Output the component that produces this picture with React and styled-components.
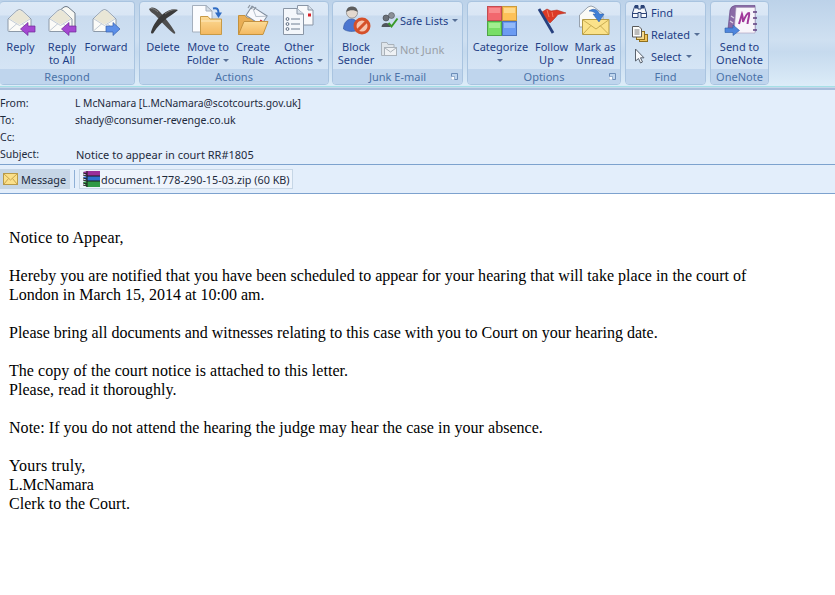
import React from "react";
import styled, { createGlobalStyle } from "styled-components";

const Global = createGlobalStyle`
html, body { margin: 0; padding: 0; background: #fff; }
body { font-family: "Noto Sans", "Liberation Sans", sans-serif; overflow: hidden; }
`;

const Page = styled.div`
  width: 835px;
  height: 595px;
  overflow: hidden;
  background: #fff;
`;

const Ribbon = styled.div`
  height: 86px;
  display: flex;
  align-items: flex-start;
  padding-top: 1px;
  box-sizing: border-box;
  background: linear-gradient(180deg, #bcd2e9 0, #cfe0f1 40px, #c6daee 52px, #dcecf8 86px);
`;

const Group = styled.div`
  width: ${(p) => p.$w}px;
  margin-right: ${(p) => p.$gap ?? 4}px;
  height: 84px;
  flex: none;
  box-sizing: border-box;
  display: flex;
  flex-direction: column;
  border: 1px solid #a9c4e0;
  border-left-width: ${(p) => (p.$first ? 0 : 1)}px;
  border-radius: 4px;
  overflow: hidden;
  background: linear-gradient(180deg, #dde9f6 0, #d9e6f5 13px, #c9dbef 14px, #d5e5f5 68px);
`;

const GroupBody = styled.div`
  flex: 1;
  display: flex;
  padding-left: ${(p) => p.$pad ?? 0}px;
`;

const GroupLabel = styled.div`
  position: relative;
  height: 15px;
  line-height: 15px;
  text-align: center;
  font-size: 11px;
  color: #4a72a8;
  background: #bfd5ed;
`;

const Launcher = styled.svg`
  position: absolute;
  right: 4px;
  top: 4px;
`;

const BigButton = styled.div`
  width: ${(p) => p.$w}px;
  flex: none;
  display: flex;
  flex-direction: column;
  align-items: center;
  padding-top: 3px;
`;

const BigIcon = styled.svg`
  width: 32px;
  height: 32px;
  overflow: visible;
  flex: none;
`;

const BigText = styled.div`
  margin-top: 3px;
  font-size: 11px;
  line-height: 13px;
  color: #1f3f86;
  text-align: center;
  white-space: nowrap;
`;

const Caret = styled.span`
  display: inline-block;
  width: 0;
  height: 0;
  margin-left: ${(p) => p.$ml ?? 4}px;
  vertical-align: 2px;
  border-left: 3px solid transparent;
  border-right: 3px solid transparent;
  border-top: 3px solid #566f96;
`;

const SmallColumn = styled.div`
  display: flex;
  flex-direction: column;
  padding-top: ${(p) => p.$top ?? 0}px;
  padding-left: ${(p) => p.$left ?? 0}px;
  row-gap: ${(p) => p.$gap ?? 0}px;
`;

const SmallButton = styled.div`
  display: flex;
  align-items: center;
  height: 22px;
  box-sizing: border-box;
  padding-bottom: 2px;
  font-size: 11px;
  white-space: nowrap;
  color: ${(p) => (p.$off ? "#9a9fa6" : "#1f3f86")};
`;

const SmallIcon = styled.svg`
  width: 16px;
  height: 16px;
  flex: none;
  margin-right: 3px;
  overflow: visible;
`;

const Seam = styled.div`
  height: 4px;
  background: linear-gradient(180deg, #a4e0e6 0, #a4e0e6 1px, #c6d8ea 1px, #c6d8ea 2px, #a8bedc 2px, #a8bedc 4px);
`;

const Header = styled.div`
  height: 75px;
  box-sizing: border-box;
  padding-top: 5px;
  background: #e3eefb;
  border-bottom: 1px solid #7da2ce;
`;

const HeaderRow = styled.div`
  display: flex;
  height: ${(p) => p.$h ?? 17}px;
  line-height: 17px;
  font-size: ${(p) => p.$fs ?? 10.5}px;
  color: #1d2a3c;
  white-space: nowrap;
`;

const HeaderKey = styled.div`
  width: ${(p) => p.$w ?? 75}px;
  flex: none;
  font-size: 10.5px;
`;

const Tabs = styled.div`
  height: 29px;
  box-sizing: border-box;
  display: flex;
  align-items: center;
  background: #e3eefb;
  border-bottom: 1px solid #7da2ce;
`;

const MessageTab = styled.div`
  width: 70px;
  height: 20px;
  box-sizing: border-box;
  display: flex;
  align-items: center;
  padding-left: 3px;
  font-size: 10.8px;
  color: #1d2a3c;
  background: #c6d6e6;
`;

const TabDivider = styled.div`
  width: 1px;
  height: 18px;
  margin: 0 4px;
  background: #8fb0d6;
`;

const AttachTab = styled.div`
  height: 20px;
  width: 214px;
  box-sizing: border-box;
  display: flex;
  align-items: center;
  padding-left: 3px;
  font-size: 10.8px;
  color: #1d2a3c;
  background: #eef4fc;
  border: 1px solid #c6d6e6;
`;

const Body = styled.div`
  padding: 34px 0 0 9px;
  font-family: "Liberation Serif", "Times New Roman", serif;
  font-size: 16px;
  line-height: 19px;
  color: #000;
`;

const Para = styled.div`
  margin-bottom: 19px;
`;

const Line = styled.div`
  letter-spacing: ${(p) => p.$ls ?? 0}px;
  white-space: nowrap;
`;

const MiniEnvelope = styled.svg`
  width: 15px;
  height: 12px;
  flex: none;
  margin-right: 3px;
`;

const ZipIcon = styled.svg`
  width: 18px;
  height: 17px;
  flex: none;
`;

const Env = () => (
  <g>
    <path d="M3 14 L12 5.5 Q14.5 3.5 17 5.5 L26 14 V25.5 Q26 26.5 25 26.5 H4 Q3 26.5 3 25.5 Z" fill="#fbfbf8" stroke="#8c99a8" />
    <path d="M4 13.5 L12.5 6 Q14.5 4.5 16.5 6 L25 13.5 L14.5 19.5 Z" fill="#e9e6d6" />
    <path d="M4 14 L14.5 20.5 L25 14 M4 25.5 L12 18.5 M25 25.5 L17 18.5" fill="none" stroke="#c3ccd6" />
  </g>
);

const ArrowLeft = () => (
  <path d="M15.5 24 L23 17.5 V21 H30 V27 H23 V30.5 Z" fill="#a548d2" stroke="#6f2b96" strokeWidth="0.7" />
);

const ArrowRight = () => (
  <path d="M30 24 L23 17.5 V21 H16 V27 H23 V30.5 Z" fill="#5c8fe8" stroke="#3560ad" strokeWidth="0.7" />
);

const ReplyIcon = () => (
  <BigIcon viewBox="0 0 32 32"><Env /><ArrowLeft /></BigIcon>
);

const ReplyAllIcon = () => (
  <BigIcon viewBox="0 0 32 32">
    <path d="M13 6 L18 2 Q20 1 22 2 L29 8 V25 H13 Z" fill="#f8f8f3" stroke="#6c7886" />
    <Env /><ArrowLeft />
  </BigIcon>
);

const ForwardIcon = () => (
  <BigIcon viewBox="0 0 32 32"><Env /><ArrowRight /></BigIcon>
);

const DeleteIcon = () => (
  <BigIcon viewBox="0 0 32 32">
    <path d="M2 4 C4 1.5 8 2 11 5 C16 10 24 20 28 27 C29 29 27 29 26 28 C20 23 12 14 8 10 C6 8 3 7 2 4 Z" fill="#4f4f4f" />
    <path d="M31 5 C27 3 21 5 16 9 C11 13 6 20 4 27 C4 29 6 29 7 27 C10 22 15 17 20 13 C24 10 28 8 31 5 Z" fill="#3a3a3a" />
    <path d="M3.5 3.5 C6 3 9 5 11 7 M29 4.5 C25 4.5 21 6.5 18 9" fill="none" stroke="#8c8c8c" strokeWidth="0.8" />
  </BigIcon>
);

const MoveIcon = () => (
  <BigIcon viewBox="0 0 32 32">
    <defs>
      <linearGradient id="folderFill" x1="0" y1="0" x2="0" y2="1">
        <stop offset="0" stopColor="#fcdb96" />
        <stop offset="1" stopColor="#f3b860" />
      </linearGradient>
    </defs>
    <path d="M0.5 0.5 H14 L20 6 V27 H0.5 Z" fill="#fbfcfe" stroke="#a4afbd" />
    <path d="M14 0.5 V6 H20 Z" fill="#d6dfe9" stroke="#a4afbd" />
    <path d="M8.5 11.5 H16 L18 14 H29.5 V29.5 H8.5 Z" fill="url(#folderFill)" stroke="#c79a47" />
    <path d="M9 16 H29" stroke="#fdeabf" />
    <path d="M21 3.5 C25 2.5 26.5 4 26.5 8" fill="none" stroke="#2f6cc4" strokeWidth="2" />
    <path d="M23 7.5 H30 L26.5 13 Z" fill="#2f6cc4" />
  </BigIcon>
);

const RuleIcon = () => (
  <BigIcon viewBox="0 0 32 32">
    <path d="M1.5 10.5 H8 L10 13 H21 V29.5 H1.5 Z" fill="#e9ae55" stroke="#c4923f" />
    <g transform="rotate(33 20 11)">
      <rect x="10.5" y="5.5" width="18" height="11" fill="#f7f9fd" stroke="#7f8c9c" />
      <path d="M11 6 L19.5 12 L28 6" fill="none" stroke="#b6c0cc" />
      <rect x="25" y="12" width="2.5" height="2.5" fill="#d8232a" />
    </g>
    <path d="M7 16.5 H31 L26 29.5 H1.5 Z" fill="url(#folderFill)" stroke="#c4923f" />
    <path d="M11 3 L13 0 M14 4 L16 1 M17 5 L19 2" stroke="#8a94a0" strokeWidth="1.2" />
  </BigIcon>
);

const OtherIcon = () => (
  <BigIcon viewBox="0 0 32 32">
    <path d="M14.5 0.5 H25 L30 5 V20 H14.5 Z" fill="#f9fafc" stroke="#8a96a6" />
    <path d="M25 0.5 V5 H30" fill="#d6dfe9" stroke="#8a96a6" />
    <rect x="25" y="8.5" width="3" height="3" fill="#d8232a" />
    <path d="M0.5 3.5 H14 L20.5 9 V29.5 H0.5 Z" fill="#f4f7fb" stroke="#8a96a6" />
    <path d="M14 3.5 V9 H20.5" fill="#d6dfe9" stroke="#8a96a6" />
    <circle cx="4.5" cy="14" r="1.4" fill="#fff" stroke="#5c6b80" />
    <circle cx="4.5" cy="19" r="1.4" fill="#fff" stroke="#5c6b80" />
    <circle cx="4.5" cy="24" r="1.4" fill="#fff" stroke="#5c6b80" />
    <path d="M8 14 H17 M8 19 H17 M8 24 H17" stroke="#6f7f92" />
  </BigIcon>
);

const BlockIcon = () => (
  <BigIcon viewBox="0 0 32 32">
    <path d="M3.5 24 C3.5 17 8 14 11.5 14 C15 14 19 17 19 25 C14 27 7 27 3.5 24 Z" fill="#4b76d0" stroke="#2c4f9a" strokeWidth="0.6" />
    <circle cx="12" cy="7.5" r="5.6" fill="#e3d9cf" stroke="#6e6e6e" strokeWidth="0.6" />
    <path d="M6.5 7 C6.5 3 9 1.8 12 1.8 C15 1.8 17.5 3 17.5 7 C15 4.5 9 4.5 6.5 7 Z" fill="#5d5d5d" />
    <circle cx="22" cy="21" r="7" fill="#f6c3ae" stroke="#d5502a" strokeWidth="3" />
    <path d="M17 26 L27 16" stroke="#d5502a" strokeWidth="3" />
  </BigIcon>
);

const Swatch = ({ x, y, fill, light, edge }) => (
  <g>
    <rect x={x + 0.5} y={y + 0.5} width="14" height="14" fill={fill} stroke={edge} />
    <rect x={x + 2} y={y + 2} width="11" height="5" fill={light} />
  </g>
);

const CategorizeIcon = () => (
  <BigIcon viewBox="0 0 32 32">
    <Swatch x={2} y={1} fill="#f2686e" light="#f88b8d" edge="#c24c50" />
    <Swatch x={17} y={1} fill="#fdc158" light="#fed98a" edge="#c99b3e" />
    <Swatch x={2} y={16} fill="#78de66" light="#a2ee8f" edge="#4fa548" />
    <Swatch x={17} y={16} fill="#6b9bf2" light="#93b9f8" edge="#4a72bc" />
  </BigIcon>
);

const FlagIcon = () => (
  <BigIcon viewBox="0 0 32 32">
    <path d="M6 7 L11 4 L15 6 L21 5 L30 8 L22 9.5 L19 13 L14 18 L10 14 Z" fill="#dc3a26" stroke="#a82a1a" strokeWidth="0.5" />
    <path d="M11 5 L13 12 M16 7 L17 12" stroke="#f27a62" />
    <path d="M3 4 L17 28" stroke="#27407e" strokeWidth="2.8" />
  </BigIcon>
);

const UnreadIcon = () => (
  <BigIcon viewBox="0 0 32 32">
    <path d="M0.5 10 L9 2 Q12 0 15 2 L24 9 V22 H0.5 Z" fill="#fafaf6" stroke="#98a2ae" />
    <path d="M3.5 14.5 H30 V29.5 H3.5 Z" fill="#fbe28a" stroke="#b49a45" />
    <path d="M4 15 L17 24 L29.5 15 M4 29 L12 20.5 M29.5 29 L21 20.5" fill="none" stroke="#c9ad52" />
    <path d="M10 6 C14 3 19 4 20.5 9 H25 L20 17 L14 9 H17 C15.5 7 13 6 10 6 Z" fill="#3f7fd6" stroke="#2a5ba6" strokeWidth="0.5" />
  </BigIcon>
);

const OneNoteIcon = () => (
  <BigIcon viewBox="0 0 32 32">
    <path d="M4 24 L6 5 Q7 1 11 0.5 H31 V27 H9 Z" fill="#8a6aa6" stroke="#5f3f80" strokeWidth="0.6" />
    <path d="M12 2.5 H31 V28 H10 Z" fill="#f8f5fb" stroke="#a898b8" strokeWidth="0.6" />
    <path d="M15 19 L18 9 C19 12 19 15 19 17 C21 12 23 8 25 8 C26 9 24 14 23.5 19" fill="none" stroke="#a0389a" strokeWidth="2" />
    <path d="M29 7 h4 M29 13 h4 M29 19 h4 M29 25 h4" stroke="#5f3f80" strokeWidth="1.4" />
    <path d="M7 11 L10 13 M6 16 L9 18" stroke="#d9cfe3" strokeWidth="1.4" />
    <path d="M1 23 H9 V20 L15.5 25.5 L9 30.5 V27.5 H1 Z" fill="#4f86dd" stroke="#2a5ba6" strokeWidth="0.6" />
  </BigIcon>
);

const SafeIcon = () => (
  <SmallIcon viewBox="0 0 16 16">
    <circle cx="10.5" cy="3.5" r="3" fill="#8b9097" stroke="#4f555b" strokeWidth="0.6" />
    <circle cx="5" cy="6" r="3" fill="#6b7077" stroke="#3d4248" strokeWidth="0.6" />
    <path d="M0.5 15 C0.5 9.5 9.5 9.5 9.5 15 Z" fill="#4f555b" />
    <path d="M7.5 11 L10.5 14.5 L16.5 6.5" fill="none" stroke="#3a9a2a" strokeWidth="2" />
  </SmallIcon>
);

const NotJunkIcon = () => (
  <SmallIcon viewBox="0 0 16 16">
    <path d="M0.5 1.5 H6 L7 3.5 H13 V14.5 H0.5 Z" fill="#dfe5ea" stroke="#aab2ba" />
    <rect x="3.5" y="6.5" width="12" height="8" fill="#eef1f4" stroke="#aab2ba" />
    <path d="M4 7 L9.5 11 L15 7" fill="none" stroke="#aab2ba" />
  </SmallIcon>
);

const BinocularIcon = () => (
  <SmallIcon viewBox="0 0 16 16">
    <path d="M3 1.5 H6 V5 H9 V1.5 H12 L14.5 9 V13.5 H9 V8.5 H6 V13.5 H0.5 V9 Z" fill="#f4f7fb" stroke="#2b4377" />
    <rect x="3" y="1.5" width="3" height="3" fill="#2b4377" />
    <rect x="9" y="1.5" width="3" height="3" fill="#2b4377" />
    <path d="M1 9.5 H6 M9 9.5 H14" stroke="#2b4377" />
  </SmallIcon>
);

const RelatedIcon = () => (
  <SmallIcon viewBox="0 0 16 16">
    <rect x="7.5" y="8.5" width="8" height="7" fill="#f0c35a" stroke="#8f6f1e" />
    <rect x="4.5" y="5.5" width="8" height="8" fill="#f7db8e" stroke="#8f6f1e" />
    <path d="M0.5 0.5 H7 L9.5 3 V11 H0.5 Z" fill="#fdfdfb" stroke="#5a5a5a" />
    <path d="M2.5 4 H7.5 M2.5 6 H7.5 M2.5 8 H7.5" stroke="#7a7a7a" />
  </SmallIcon>
);

const CursorIcon = () => (
  <SmallIcon viewBox="0 0 16 16">
    <path d="M3.5 1 V13 L6.5 10.5 L8.5 15 L10.5 14 L8.5 9.8 H12 Z" fill="#f6f8fb" stroke="#59626e" />
  </SmallIcon>
);

const DialogLauncher = () => (
  <Launcher width="7" height="7" viewBox="0 0 7 7">
    <path d="M0.5 3 V0.5 H6.5 V6.5 H3.5" fill="none" stroke="#6c8db8" />
    <rect x="0" y="3.5" width="3.5" height="3.5" fill="#fff" stroke="#6c8db8" strokeWidth="0.6" />
  </Launcher>
);

const Big = ({ w, icon, children }) => (
  <BigButton $w={w}>
    {icon}
    <BigText>{children}</BigText>
  </BigButton>
);

const App = () => (
  <Page>
    <Global />
    <Ribbon>
      <Group $w={135} $first>
        <GroupBody>
          <Big w={41} icon={<ReplyIcon />}>Reply</Big>
          <Big w={42} icon={<ReplyAllIcon />}>Reply<br />to All</Big>
          <Big w={46} icon={<ForwardIcon />}>Forward</Big>
        </GroupBody>
        <GroupLabel>Respond</GroupLabel>
      </Group>
      <Group $w={190} $gap={3}>
        <GroupBody $pad={1}>
          <Big w={44} icon={<DeleteIcon />}>Delete</Big>
          <Big w={46} icon={<MoveIcon />}>Move to<br />Folder<Caret /></Big>
          <Big w={44} icon={<RuleIcon />}>Create<br />Rule</Big>
          <Big w={48} icon={<OtherIcon />}>Other<br />Actions<Caret /></Big>
        </GroupBody>
        <GroupLabel>Actions</GroupLabel>
      </Group>
      <Group $w={131}>
        <GroupBody $pad={1}>
          <Big w={44} icon={<BlockIcon />}>Block<br />Sender</Big>
          <SmallColumn $top={8} $left={3} $gap={7}>
            <SmallButton>
              <SafeIcon />Safe Lists<Caret />
            </SmallButton>
            <SmallButton $off>
              <NotJunkIcon />Not Junk
            </SmallButton>
          </SmallColumn>
        </GroupBody>
        <GroupLabel>Junk E-mail<DialogLauncher /></GroupLabel>
      </Group>
      <Group $w={154}>
        <GroupBody $pad={2}>
          <Big w={61} icon={<CategorizeIcon />}>Categorize<br /><Caret $ml={0} /></Big>
          <Big w={41} icon={<FlagIcon />}>Follow<br />Up<Caret /></Big>
          <Big w={46} icon={<UnreadIcon />}>Mark as<br />Unread</Big>
        </GroupBody>
        <GroupLabel>Options<DialogLauncher /></GroupLabel>
      </Group>
      <Group $w={81}>
        <GroupBody>
          <SmallColumn $top={0} $left={6}>
            <SmallButton>
              <BinocularIcon />Find
            </SmallButton>
            <SmallButton>
              <RelatedIcon />Related<Caret />
            </SmallButton>
            <SmallButton>
              <CursorIcon />Select<Caret />
            </SmallButton>
          </SmallColumn>
        </GroupBody>
        <GroupLabel>Find</GroupLabel>
      </Group>
      <Group $w={59}>
        <GroupBody>
          <Big w={57} icon={<OneNoteIcon />}>Send to<br />OneNote</Big>
        </GroupBody>
        <GroupLabel>OneNote</GroupLabel>
      </Group>
    </Ribbon>
    <Seam />
    <Header>
      <HeaderRow $fs={10.3}><HeaderKey>From:</HeaderKey>L McNamara [L.McNamara@scotcourts.gov.uk]</HeaderRow>
      <HeaderRow><HeaderKey>To:</HeaderKey>shady@consumer-revenge.co.uk</HeaderRow>
      <HeaderRow><HeaderKey>Cc:</HeaderKey></HeaderRow>
      <HeaderRow $h={18} $fs={11}><HeaderKey $w={76}>Subject:</HeaderKey>Notice to appear in court RR#1805</HeaderRow>
    </Header>
    <Tabs>
      <MessageTab>
        <MiniEnvelope viewBox="0 0 15 12">
          <rect x="0.5" y="0.5" width="14" height="11" fill="#fbe08a" stroke="#b99a48" />
          <path d="M1 1 L7.5 7 L14 1 M1 11 L5.5 5.5 M14 11 L9.5 5.5" fill="none" stroke="#c9a64f" />
        </MiniEnvelope>
        Message
      </MessageTab>
      <TabDivider />
      <AttachTab>
        <ZipIcon viewBox="0 0 18 17">
          <path d="M0 1 L4 0 H17 V5 H4 Z" fill="#9a2f9a" />
          <path d="M0 6 L4 5 H17 V10 H4 Z" fill="#2f6fd0" />
          <path d="M0 11 L4 10 H17 V16 H4 Z" fill="#2f9a46" />
          <path d="M4 5 H17 M4 10 H17 M4 0 V16" stroke="#1c1c1c" strokeWidth="1" />
          <path d="M0 2 L4 3 M0 4 L4 5 M0 7 L4 8 M0 9 L4 10 M0 12 L4 13 M0 14 L4 15" stroke="#222" strokeWidth="1" />
        </ZipIcon>
        document.1778-290-15-03.zip (60 KB)
      </AttachTab>
    </Tabs>
    <Body>
      <Para><Line $ls={0.12}>Notice to Appear,</Line></Para>
      <Para>
        <Line $ls={0.018}>Hereby you are notified that you have been scheduled to appear for your hearing that will take place in the court of</Line>
        <Line>London in March 15, 2014 at 10:00 am.</Line>
      </Para>
      <Para><Line $ls={-0.01}>Please bring all documents and witnesses relating to this case with you to Court on your hearing date.</Line></Para>
      <Para>
        <Line $ls={0.05}>The copy of the court notice is attached to this letter.</Line>
        <Line $ls={0.04}>Please, read it thoroughly.</Line>
      </Para>
      <Para><Line $ls={0.036}>Note: If you do not attend the hearing the judge may hear the case in your absence.</Line></Para>
      <Para>
        <Line $ls={0.15}>Yours truly,</Line>
        <Line $ls={-0.1}>L.McNamara</Line>
        <Line $ls={0.05}>Clerk to the Court.</Line>
      </Para>
    </Body>
  </Page>
);

export default App;
